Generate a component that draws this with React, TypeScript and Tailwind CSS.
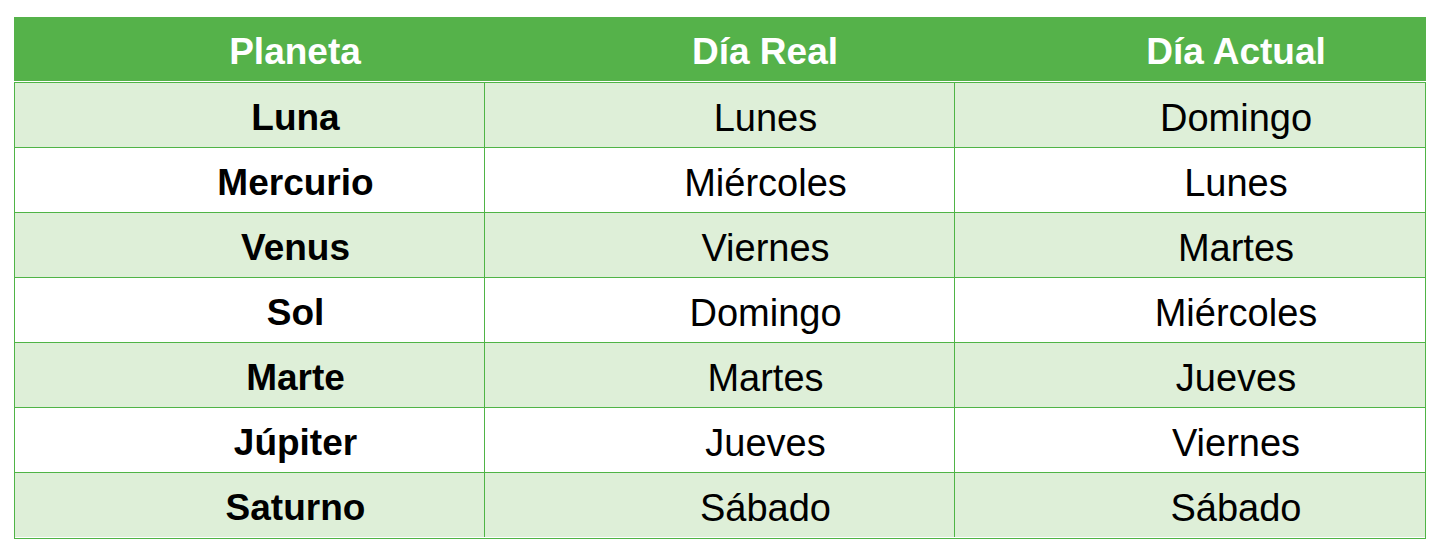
import React from "react";

const rows: [string, string, string][] = [
  ["Luna", "Lunes", "Domingo"],
  ["Mercurio", "Miércoles", "Lunes"],
  ["Venus", "Viernes", "Martes"],
  ["Sol", "Domingo", "Miércoles"],
  ["Marte", "Martes", "Jueves"],
  ["Júpiter", "Jueves", "Viernes"],
  ["Saturno", "Sábado", "Sábado"],
];

export default function App() {
  return (
    <div
      className="w-[1443px] h-[560px] bg-white pt-[17px] pl-[14px]"
      style={{ fontFamily: '"Liberation Sans", Arial, sans-serif' }}
    >
      <div className="w-[1412px]">
        <div className="flex h-[64px] bg-[#55b24a] text-white font-bold text-[37px] leading-none">
          <div className="w-[470px] flex items-center justify-center pl-[92px] pt-[5px]">Planeta</div>
          <div className="w-[470px] flex items-center justify-center pl-[92px] pt-[5px]">Día Real</div>
          <div className="flex-1 flex items-center justify-center pl-[92px] pt-[5px]">Día Actual</div>
        </div>
        <div className="h-px bg-white" />
        <div className="border-l border-r border-[#4fb446]">
          {rows.map((r, i) => (
            <div
              key={i}
              className={`flex h-[65px] border-t border-[#4fb446] text-black leading-none ${
                i % 2 === 0 ? "bg-[#deefd8]" : "bg-white"
              }`}
            >
              <div className="w-[469px] flex items-center justify-center pl-[92px] pt-[5px] font-bold text-[37px]">
                {r[0]}
              </div>
              <div className="w-[470px] border-l border-[#4fb446] flex items-center justify-center pl-[92px] pt-[5px] text-[38px]">
                {r[1]}
              </div>
              <div className="flex-1 border-l border-[#4fb446] flex items-center justify-center pl-[92px] pt-[5px] text-[38px]">
                {r[2]}
              </div>
            </div>
          ))}
          <div className="h-px bg-white" />
        </div>
        <div className="h-px bg-[#4fb446]" />
      </div>
    </div>
  );
}
